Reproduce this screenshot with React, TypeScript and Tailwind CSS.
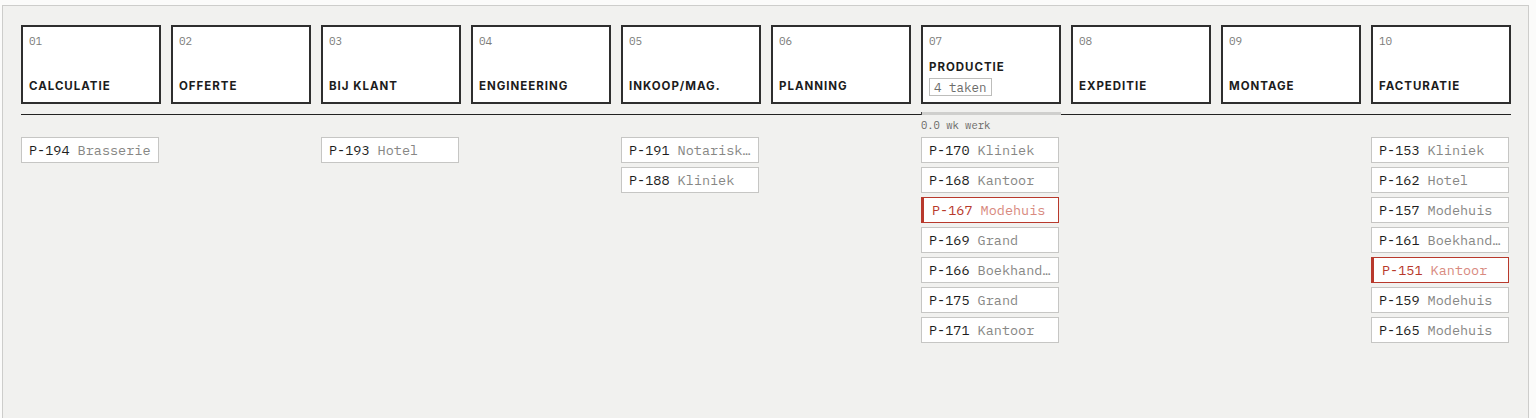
type Job = { code: string; name: string; late?: boolean };
type Stage = { nr: string; title: string; tasks?: number; jobs: Job[] };

const stages: Stage[] = [
  { nr: "01", title: "CALCULATIE", jobs: [{ code: "P-194", name: "Brasserie" }] },
  { nr: "02", title: "OFFERTE", jobs: [] },
  { nr: "03", title: "BIJ KLANT", jobs: [{ code: "P-193", name: "Hotel" }] },
  { nr: "04", title: "ENGINEERING", jobs: [] },
  {
    nr: "05",
    title: "INKOOP/MAG.",
    jobs: [
      { code: "P-191", name: "Notarisk…" },
      { code: "P-188", name: "Kliniek" },
    ],
  },
  { nr: "06", title: "PLANNING", jobs: [] },
  {
    nr: "07",
    title: "PRODUCTIE",
    tasks: 4,
    jobs: [
      { code: "P-170", name: "Kliniek" },
      { code: "P-168", name: "Kantoor" },
      { code: "P-167", name: "Modehuis", late: true },
      { code: "P-169", name: "Grand" },
      { code: "P-166", name: "Boekhand…" },
      { code: "P-175", name: "Grand" },
      { code: "P-171", name: "Kantoor" },
    ],
  },
  { nr: "08", title: "EXPEDITIE", jobs: [] },
  { nr: "09", title: "MONTAGE", jobs: [] },
  {
    nr: "10",
    title: "FACTURATIE",
    jobs: [
      { code: "P-153", name: "Kliniek" },
      { code: "P-162", name: "Hotel" },
      { code: "P-157", name: "Modehuis" },
      { code: "P-161", name: "Boekhand…" },
      { code: "P-151", name: "Kantoor", late: true },
      { code: "P-159", name: "Modehuis" },
      { code: "P-165", name: "Modehuis" },
    ],
  },
];

const mono = "font-['IBM_Plex_Mono','DejaVu_Sans_Mono',monospace]";

function JobChip({ job }: { job: Job }) {
  return (
    <div
      className={
        job.late
          ? "w-[138px] h-[26px] flex items-center bg-white border-[1.5px] border-l-[3px] border-[#b8392c] pl-[8px] pr-[4px]"
          : "w-[138px] h-[26px] flex items-center bg-white border-[1.5px] border-[#c6c6c4] pl-[7px] pr-[4px]"
      }
    >
      <span className={`${mono} text-[13.5px] leading-[18px] whitespace-nowrap`}>
        <span className={job.late ? "text-[#b8392c]" : "text-[#1e1e1e]"}>{job.code}</span>{" "}
        <span className={job.late ? "text-[#d88a80]" : "text-[#878785]"}>{job.name}</span>
      </span>
    </div>
  );
}

export default function App() {
  return (
    <div className="h-[418px] overflow-hidden bg-[#fbfbfa] pt-[5px] pl-[2px] pr-[7px]">
      <div className="h-[440px] bg-[#f1f1ef] border border-[#cdcdcb] pt-[19px] pl-[18px] pr-[17px]">
        <div className="grid grid-cols-10 gap-[10px] pb-[10px] border-b border-[#222]">
          {stages.map((s) => (
            <div
              key={s.nr}
              className={
                s.tasks
                  ? "h-[79px] bg-white border-2 border-[#2e2e2e] flex flex-col justify-between pt-[7px] pb-[6px] px-[6px]"
                  : "h-[79px] bg-white border-2 border-[#2e2e2e] flex flex-col justify-between pt-[7px] pb-[9px] px-[6px]"
              }
            >
              <div className={`${mono} text-[11px] leading-[14px] text-[#7c7c7a]`}>{s.nr}</div>
              <div className="flex flex-col items-start">
                <div className="font-['Inter',sans-serif] font-bold text-[11.5px] leading-[14px] tracking-[0.085em] text-[#1c1c1c]">
                  {s.title}
                </div>
                {s.tasks ? (
                  <div
                    className={`${mono} mt-[4px] border border-[#bdbdbb] px-[4px] h-[18px] flex items-center text-[12.5px] text-[#6c6c6a]`}
                  >
                    {s.tasks} taken
                  </div>
                ) : null}
              </div>
            </div>
          ))}
        </div>
        <div className="grid grid-cols-10 gap-[10px]">
          {stages.map((s) => (
            <div key={s.nr} className="flex flex-col">
              <div className="relative h-[22px]">
                {s.tasks ? (
                  <>
                    <div className="absolute left-0 right-0 top-[-3px] h-[3px] bg-[#cfcfcd]">
                      <div className="w-[1px] h-full bg-[#444]" />
                    </div>
                    <div className={`${mono} absolute left-0 top-[3px] text-[10.5px] leading-[14px] text-[#6a6a68]`}>
                      0.0 wk werk
                    </div>
                  </>
                ) : null}
              </div>
              <div className="flex flex-col gap-[4px]">
                {s.jobs.map((j) => (
                  <JobChip key={j.code} job={j} />
                ))}
              </div>
            </div>
          ))}
        </div>
      </div>
    </div>
  );
}
